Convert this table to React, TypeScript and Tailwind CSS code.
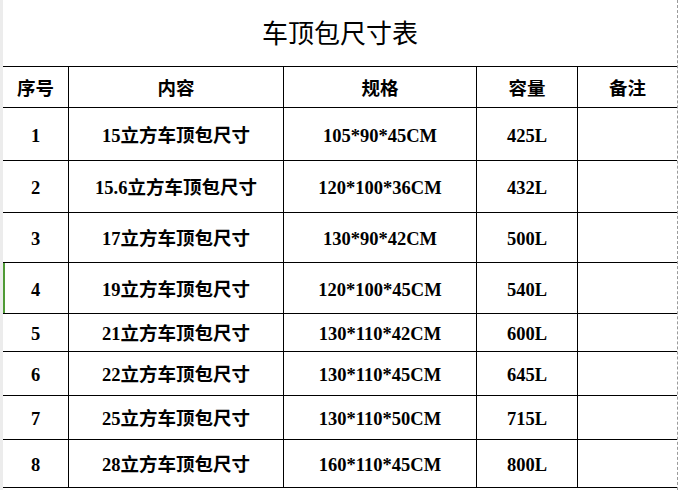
const rows = [
    { no: '1', name: '15立方车顶包尺寸', spec: '105*90*45CM', cap: '425L', h: 'h-[53px]' },
    { no: '2', name: '15.6立方车顶包尺寸', spec: '120*100*36CM', cap: '432L', h: 'h-[52px]' },
    { no: '3', name: '17立方车顶包尺寸', spec: '130*90*42CM', cap: '500L', h: 'h-[50px]' },
    { no: '4', name: '19立方车顶包尺寸', spec: '120*100*45CM', cap: '540L', h: 'h-[51px]', active: true },
    { no: '5', name: '21立方车顶包尺寸', spec: '130*110*42CM', cap: '600L', h: 'h-[38px]' },
    { no: '6', name: '22立方车顶包尺寸', spec: '130*110*45CM', cap: '645L', h: 'h-[44px]' },
    { no: '7', name: '25立方车顶包尺寸', spec: '130*110*50CM', cap: '715L', h: 'h-[44px]' },
    { no: '8', name: '28立方车顶包尺寸', spec: '160*110*45CM', cap: '800L', h: 'h-[48px]' },
];

const cols = 'grid grid-cols-[66px_215px_193px_101px_99px]';
const cell = 'flex items-center justify-center pt-[5px] border-r border-b border-black';
const lastCell = 'flex items-center justify-center pt-[5px] border-b border-black';

const App = () => {
    return (
        <div className="flex h-[490px] w-[679px] overflow-hidden bg-white text-black font-['Liberation_Serif','Noto_Sans_CJK_SC',serif]">
            <div className="w-[3px] shrink-0 bg-[#ececec]" />
            <div className="flex w-[675px] flex-col border-r border-dashed border-[#9a9a9a]">
                <div className="flex h-[66px] items-center justify-center pb-[3px] text-[26px] font-['Noto_Sans_CJK_SC',serif]">
                    车顶包尺寸表
                </div>
                <div className="border-t border-black text-[18.5px] font-bold">
                    <div className={`${cols} h-[41px]`}>
                        <div className={cell}>序号</div>
                        <div className={cell}>内容</div>
                        <div className={cell}>规格</div>
                        <div className={cell}>容量</div>
                        <div className={lastCell}>备注</div>
                    </div>
                    {rows.map((r) => (
                        <div
                            key={r.no}
                            className={`${cols} ${r.h} ${r.active ? 'shadow-[inset_2px_0_0_#4f9a35]' : ''}`}
                        >
                            <div className={cell}>{r.no}</div>
                            <div className={cell}>{r.name}</div>
                            <div className={cell}>{r.spec}</div>
                            <div className={cell}>{r.cap}</div>
                            <div className={lastCell} />
                        </div>
                    ))}
                </div>
            </div>
            <div className="w-px bg-white" />
        </div>
    );
};

export default App;
